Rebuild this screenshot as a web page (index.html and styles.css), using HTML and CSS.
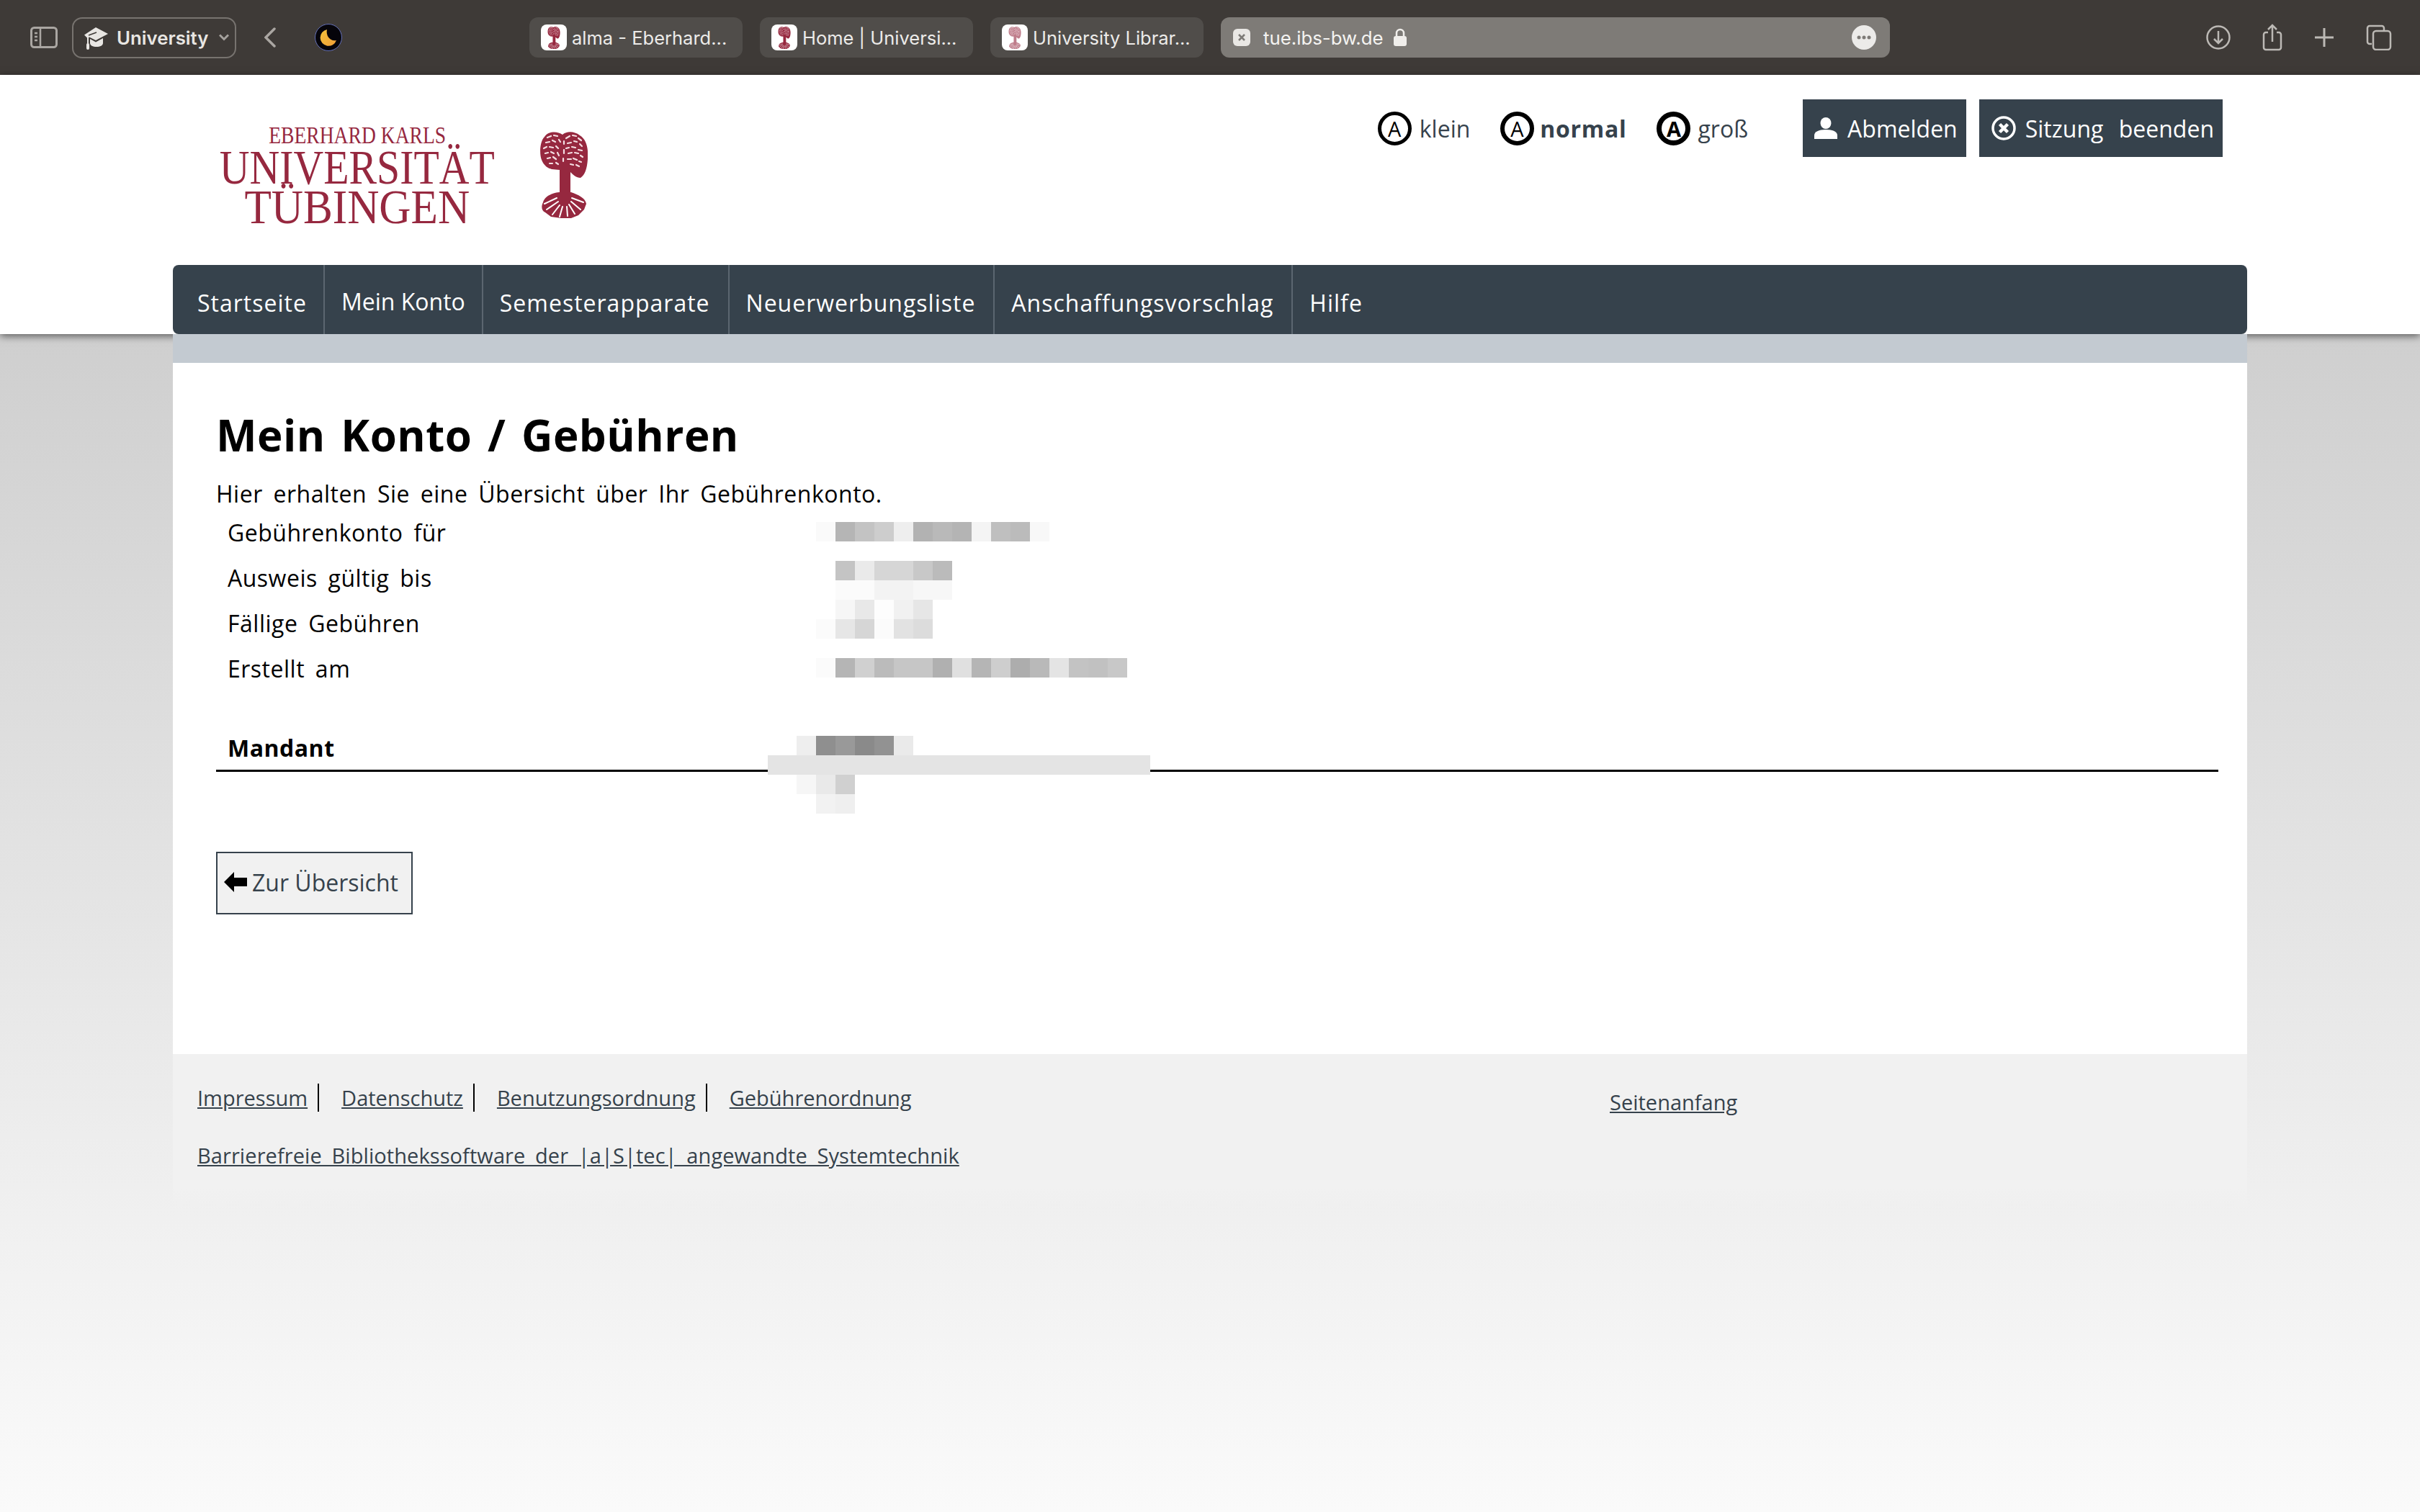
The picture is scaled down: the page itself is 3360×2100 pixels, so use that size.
FILE: index.html
```html
<!DOCTYPE html>
<html lang="de">
<head>
    <meta charset="UTF-8">
    <title>Mein Konto / Gebühren</title>
    <link rel="stylesheet" href="styles.css">
</head>
<body>
    <!-- Browser toolbar -->
    <div class="toolbar">
        <svg class="tb-sidebar" width="38" height="30" viewBox="0 0 38 30" fill="none" stroke="#aaa6a2" stroke-width="3">
            <rect x="1.5" y="1.5" width="35" height="27" rx="4"/>
            <path d="M14 2v26M6 9h4M6 14h4M6 19h4" stroke-width="2.5"/>
        </svg>
        <div class="tb-group">
            <svg width="36" height="40" viewBox="0 0 36 40" fill="#e8e6e3">
                <path d="M17 6 34 15 17 24 8 19.500 5.500 21 1 16.500z"/>
                <path d="M9 22l8 4.500 10-5.500v7c0 3-4 5-9 5s-9-2-9-5z"/>
                <path d="M5 18h2v12H5z"/><rect x="4" y="28" width="4" height="9" rx="2"/>
                <path d="M7 17l11-4" stroke="#3e3a37" stroke-width="1.500" fill="none"/>
            </svg>
            <span class="tb-group-name">University</span>
            <svg width="14" height="10" viewBox="0 0 14 10" fill="none" stroke="#a5a19d" stroke-width="3"><path d="M1 1.500l6 6 6-6"/></svg>
        </div>
        <svg class="tb-back" width="16" height="28" viewBox="0 0 16 28" fill="none" stroke="#aaa6a2" stroke-width="3.500" stroke-linecap="round"><path d="M14 2 2 14l12 12"/></svg>
        <svg class="tb-moon" width="38" height="38" viewBox="0 0 38 38">
            <defs>
                <linearGradient id="moon" x1="0" y1="0" x2="1" y2="1">
                    <stop offset="0" stop-color="#f4c23c"/>
                    <stop offset="1" stop-color="#ee9d36"/>
                </linearGradient>
            </defs>
            <circle cx="19" cy="19" r="18.500" fill="#05040a" stroke="#6470b8"/>
            <path d="M17 8a11.500 11.500 0 1 0 13 15c-8 2-15-6-13-15z" fill="url(#moon)"/>
        </svg>
        <div class="tabs">
            <div class="tab">
                <span class="favicon"><svg width="22" height="31"><use href="#tree"/></svg></span>
                <span class="tab-title">alma - Eberhard...</span>
            </div>
            <div class="tab">
                <span class="favicon"><svg width="22" height="31"><use href="#tree"/></svg></span>
                <span class="tab-title">Home | Universi...</span>
            </div>
            <div class="tab">
                <span class="favicon"><svg class="faded" width="22" height="31"><use href="#tree"/></svg></span>
                <span class="tab-title">University Librar...</span>
            </div>
            <div class="tab tab-active">
                <svg class="tab-close" width="24" height="24" viewBox="0 0 24 24">
                    <rect width="24" height="24" rx="6" fill="#e9e7e4"/>
                    <path d="M8 8l8 8M16 8l-8 8" stroke="#7e7b77" stroke-width="2.500"/>
                </svg>
                <span class="tab-url">tue.ibs-bw.de</span>
                <svg class="tab-lock" width="20" height="26" viewBox="0 0 20 26">
                    <rect x="1" y="11" width="18" height="14" rx="3" fill="#f0eeeb"/>
                    <path d="M5 11V7a5 5 0 0 1 10 0v4" fill="none" stroke="#f0eeeb" stroke-width="2.500"/>
                </svg>
                <svg class="tab-more" width="34" height="34" viewBox="0 0 34 34">
                    <circle cx="17" cy="17" r="17" fill="#ecebe9"/>
                    <circle cx="10" cy="17" r="2.500" fill="#7e7b77"/><circle cx="17" cy="17" r="2.500" fill="#7e7b77"/><circle cx="24" cy="17" r="2.500" fill="#7e7b77"/>
                </svg>
            </div>
        </div>
        <div class="tb-actions">
            <svg width="34" height="34" viewBox="0 0 34 34" fill="none" stroke="#bcb9b5" stroke-width="2.500"><circle cx="17" cy="17" r="15.500"/><path d="M17 8v17M11 19l6 6 6-6"/></svg>
            <svg width="28" height="38" viewBox="0 0 28 38" fill="none" stroke="#bcb9b5" stroke-width="2.500"><path d="M8 12H5a3 3 0 0 0-3 3v18a3 3 0 0 0 3 3h18a3 3 0 0 0 3-3V15a3 3 0 0 0-3-3h-3"/><path d="M14 25V2M8 8l6-6 6 6"/></svg>
            <svg width="28" height="28" viewBox="0 0 28 28" fill="none" stroke="#bcb9b5" stroke-width="3"><path d="M14 1v26M1 14h26"/></svg>
            <svg width="36" height="36" viewBox="0 0 36 36" fill="none" stroke="#bcb9b5" stroke-width="2.500"><path d="M8 27H5a3 3 0 0 1-3-3V5a3 3 0 0 1 3-3h17a3 3 0 0 1 3 3v3"/><rect x="10" y="9" width="24" height="26" rx="4"/></svg>
        </div>
    </div>

    <!-- Shared tree symbol, used by logo and favicons -->
    <svg class="symbols" width="0" height="0">
        <symbol id="tree" viewBox="0 0 66 120">
            <path fill="#96283f" d="M31 4C24-1 11-1 6 7-1 14-1 32 2 39c3 8 9 12 14 13l11 1v34h15V56c4 4 8 8 14 8 6-4 9-12 10-26 1-13-1-27-11-33C47-1 37-1 31 4z"/>
            <path fill="#96283f" d="M26 84C16 85 6 90 4 98c-3 6-2 12 3 14l8 6 14 2h14l10-4 8-8 3-8c-1-8-12-13-21-16z"/>
            <g fill="none" stroke="#f4dfe3" stroke-width="2.200" stroke-linecap="round">
                <path d="M10 8l5-2M19 5l5 1M26 11l2 3M8 15l5-1M17 12l4 2M5 23l4-2M13 21l5 1M22 20l3 3M7 30l4-1M15 28l4 2M24 29l2 4M10 37l4-1M18 35l4 3M13 44l4 0M22 43l3 2"/>
                <path d="M36 9l5-3M45 5l5 1M53 9l4 3M38 16l5-1M47 13l4 1M55 17l3 3M36 23l4-1M44 21l5 1M53 25l5 1M39 30l5-1M48 29l5 1M56 33l3 2M38 38l5 0M46 37l5 2M54 41l3 1M42 45l4 1M50 46l4 2M33 13l0 4M33 25l0 5M32 37l0 4"/>
            </g>
            <g fill="none" stroke="#fff" stroke-width="2" stroke-linecap="round">
                <path d="M23 92 6 100M25 97 9 108M27 102 17 115M31 104 27 118M37 104l1 13M40 101l8 13M43 97l13 11M44 92l16 6"/>
            </g>
        </symbol>
    </svg>

    <div class="page">
        <header class="site-head">
            <div class="head-inner">
                <a class="logo">
                    <div class="logo-text">
                        <span class="logo-small">EBERHARD KARLS</span>
                        <span class="logo-big">UNIVERSITÄT</span>
                        <span class="logo-big logo-city">TÜBINGEN</span>
                    </div>
                    <svg class="logo-tree" width="66" height="120"><use href="#tree"/></svg>
                </a>
                <div class="head-tools">
                    <a class="size-link"><span class="size-a">A</span>klein</a>
                    <a class="size-link size-normal"><span class="size-a">A</span>normal</a>
                    <a class="size-link size-large"><span class="size-a">A</span>groß</a>
                    <a class="head-btn">
                        <svg width="34" height="30" viewBox="0 0 34 30" fill="#fff"><ellipse cx="17" cy="8" rx="7.500" ry="8"/><path d="M1 30v-5c0-5 6-8 16-8s16 3 16 8v5z"/></svg>
                        Abmelden
                    </a>
                    <a class="head-btn head-btn-end">
                        <svg width="34" height="34" viewBox="0 0 34 34" fill="none" stroke="#fff"><circle cx="17" cy="17" r="15" stroke-width="3.500"/><path d="M11.500 11.500l11 11M22.500 11.500l-11 11" stroke-width="4.500"/></svg>
                        Sitzung beenden
                    </a>
                </div>
            </div>
            <nav class="main-nav">
                <a class="nav-item">Startseite</a>
                <a class="nav-item nav-active">Mein Konto</a>
                <a class="nav-item">Semesterapparate</a>
                <a class="nav-item">Neuerwerbungsliste</a>
                <a class="nav-item">Anschaffungsvorschlag</a>
                <a class="nav-item">Hilfe</a>
            </nav>
        </header>

        <div class="wrap">
            <div class="band"></div>
            <main class="content">
                <h1>Mein Konto / Gebühren</h1>
                <p class="intro">Hier erhalten Sie eine Übersicht über Ihr Gebührenkonto.</p>
                <div class="info">
                    <div class="info-row">Gebührenkonto für</div>
                    <div class="info-row">Ausweis gültig bis</div>
                    <div class="info-row">Fällige Gebühren</div>
                    <div class="info-row">Erstellt am</div>
                </div>
                <div class="mandant">Mandant</div>
                <a class="back-btn">
                    <svg width="32" height="28" viewBox="0 0 32 28" fill="#000"><path d="M0 14 14 0v8h18v12H14v8z"/></svg>
                    Zur Übersicht
                </a>

                <!-- pixelated personal data -->
                <svg class="redact" width="531" height="405" viewBox="0 0 531 405" shape-rendering="crispEdges">
                    <g>
                        <rect x="67" y="0" width="27" height="27" fill="#fafafa"/><rect x="94" y="0" width="27" height="27" fill="#b5b5b5"/><rect x="121" y="0" width="27" height="27" fill="#c3c3c3"/><rect x="148" y="0" width="27" height="27" fill="#cdcdcd"/><rect x="175" y="0" width="27" height="27" fill="#eeeeee"/><rect x="202" y="0" width="27" height="27" fill="#b2b2b2"/><rect x="229" y="0" width="27" height="27" fill="#b9b9b9"/><rect x="256" y="0" width="27" height="27" fill="#b4b4b4"/><rect x="283" y="0" width="27" height="27" fill="#f4f4f4"/><rect x="310" y="0" width="27" height="27" fill="#bfbfbf"/><rect x="337" y="0" width="27" height="27" fill="#bbbbbb"/><rect x="364" y="0" width="27" height="27" fill="#f8f8f8"/>
                    </g>
                    <g>
                        <rect x="94" y="54" width="27" height="27" fill="#c4c4c4"/><rect x="121" y="54" width="27" height="27" fill="#eaeaea"/><rect x="148" y="54" width="54" height="27" fill="#d6d6d6"/><rect x="202" y="54" width="27" height="27" fill="#c8c8c8"/><rect x="229" y="54" width="27" height="27" fill="#bbbbbb"/>
                        <rect x="94" y="81" width="54" height="27" fill="#fbfbfb"/><rect x="148" y="81" width="54" height="27" fill="#f3f3f3"/><rect x="202" y="81" width="54" height="27" fill="#f7f7f7"/>
                    </g>
                    <g>
                        <rect x="94" y="108" width="27" height="27" fill="#f6f6f6"/><rect x="121" y="108" width="27" height="27" fill="#e8e8e8"/><rect x="148" y="108" width="27" height="27" fill="#fdfdfd"/><rect x="175" y="108" width="27" height="27" fill="#f1f1f1"/><rect x="202" y="108" width="27" height="27" fill="#e6e6e6"/>
                        <rect x="67" y="135" width="27" height="27" fill="#fbfbfb"/><rect x="94" y="135" width="27" height="27" fill="#e6e6e6"/><rect x="121" y="135" width="27" height="27" fill="#d6d6d6"/><rect x="148" y="135" width="27" height="27" fill="#fbfbfb"/><rect x="175" y="135" width="27" height="27" fill="#e2e2e2"/><rect x="202" y="135" width="27" height="27" fill="#dcdcdc"/>
                    </g>
                    <g>
                        <rect x="67" y="189" width="27" height="27" fill="#fbfbfb"/><rect x="94" y="189" width="27" height="27" fill="#b5b5b5"/><rect x="121" y="189" width="27" height="27" fill="#d0d0d0"/><rect x="148" y="189" width="27" height="27" fill="#bbbbbb"/><rect x="175" y="189" width="54" height="27" fill="#c6c6c6"/><rect x="229" y="189" width="27" height="27" fill="#b0b0b0"/><rect x="256" y="189" width="27" height="27" fill="#e0e0e0"/><rect x="283" y="189" width="27" height="27" fill="#b5b5b5"/><rect x="310" y="189" width="27" height="27" fill="#cecece"/><rect x="337" y="189" width="27" height="27" fill="#adadad"/><rect x="364" y="189" width="27" height="27" fill="#b9b9b9"/><rect x="391" y="189" width="27" height="27" fill="#e4e4e4"/><rect x="418" y="189" width="27" height="27" fill="#c3c3c3"/><rect x="445" y="189" width="27" height="27" fill="#c1c1c1"/><rect x="472" y="189" width="27" height="27" fill="#c8c8c8"/>
                    </g>
                    <g>
                        <rect x="40" y="297" width="27" height="27" fill="#eeeeee"/><rect x="67" y="297" width="27" height="27" fill="#8f8f8f"/><rect x="94" y="297" width="27" height="27" fill="#999999"/><rect x="121" y="297" width="27" height="27" fill="#8a8a8a"/><rect x="148" y="297" width="27" height="27" fill="#929292"/><rect x="175" y="297" width="27" height="27" fill="#eaeaea"/>
                        <rect x="0" y="324" width="531" height="27" fill="#e4e4e4"/>
                        <rect x="40" y="351" width="27" height="27" fill="#f6f6f6"/><rect x="67" y="351" width="27" height="27" fill="#e9e9e9"/><rect x="94" y="351" width="27" height="27" fill="#d0d0d0"/>
                        <rect x="67" y="378" width="27" height="27" fill="#f2f2f2"/><rect x="94" y="378" width="27" height="27" fill="#efefef"/>
                    </g>
                </svg>
            </main>
            <footer class="site-foot">
                <div class="foot-left">
                    <div class="foot-links">
                        <a>Impressum</a>
                        <a>Datenschutz</a>
                        <a>Benutzungsordnung</a>
                        <a>Gebührenordnung</a>
                    </div>
                    <a class="foot-credit">Barrierefreie Bibliothekssoftware der |a|S|tec| angewandte Systemtechnik</a>
                </div>
                <a class="foot-top">Seitenanfang</a>
            </footer>
        </div>
    </div>
</body>
</html>
```

FILE: styles.css
```css
/* Global */
* {
    margin: 0;
    padding: 0;
    box-sizing: border-box;
}

html, body {
    height: 100%;
}

body {
    font-family: "Open Sans", sans-serif;
    font-size: 32px;
    color: #000;
    background: #fff;
    overflow: hidden;
}

svg {
    display: block;
    flex-shrink: 0;
}

.symbols {
    position: absolute;
}

/* Browser toolbar */
.toolbar {
    display: flex;
    align-items: center;
    height: 104px;
    padding-left: 42px;
    background: #3e3a37;
    font-family: Inter, sans-serif;
}

.tb-group {
    display: flex;
    align-items: center;
    width: 228px;
    height: 57px;
    margin-left: 20px;
    padding-left: 14px;
    border: 2px solid #77736f;
    border-radius: 14px;
}

.tb-group-name {
    margin: 0 15px 0 10px;
    font-size: 25.8px;
    font-weight: 600;
    color: #e8e6e3;
}

.tb-back {
    margin-left: 39px;
}

.tb-moon {
    margin-left: 54px;
}

.tabs {
    display: flex;
    gap: 24px;
    margin-left: 260px;
}

.tab {
    display: flex;
    align-items: center;
    width: 296px;
    height: 56px;
    padding-left: 16px;
    border-radius: 12px;
    background: #504d4a;
}

.favicon {
    display: flex;
    align-items: center;
    justify-content: center;
    width: 36px;
    height: 36px;
    border-radius: 8px;
    background: #fff;
}

.faded {
    opacity: .6;
}

.tab-title {
    margin-left: 7px;
    font-size: 25.5px;
    color: #ecebe9;
    white-space: nowrap;
}

.tab-active {
    width: 929px;
    padding-left: 17px;
    background: #7e7b77;
}

.tab-url {
    margin-left: 18px;
    font-size: 25.8px;
    color: #f4f3f1;
}

.tab-lock {
    margin-left: 13px;
}

.tab-more {
    margin-left: auto;
    margin-right: 19px;
}

.tb-actions {
    display: flex;
    align-items: center;
    gap: 44px;
    margin-left: 439px;
}

/* Page */
.page {
    height: 1996px;
    background: linear-gradient(180deg, #cfcfcf 360px, #efefef 1546px, #fafafa 1996px);
}

.site-head {
    position: relative;
    height: 360px;
    padding: 0 240px;
    background: #fff;
    box-shadow: 0 3px 10px rgba(0, 0, 0, .55);
}

.head-inner {
    display: flex;
    justify-content: space-between;
    height: 264px;
}

.logo {
    display: flex;
    align-items: flex-start;
    padding: 79px 0 0 66px;
}

.logo-text {
    display: flex;
    flex-direction: column;
    align-items: center;
    width: 381px;
    font-family: "Liberation Serif", serif;
    color: #96283f;
}

.logo-small {
    margin-top: -6px;
    font-size: 33px;
    line-height: 22px;
    transform: scaleX(.836);
}

.logo-big {
    margin-top: 11px;
    margin-left: -2px;
    font-size: 68px;
    line-height: 45px;
    transform: scaleX(.85);
}

.logo-city {
    margin-top: 10px;
    transform: scaleX(.9);
}

.logo-tree {
    margin: 0 0 0 63px;
}

.head-tools {
    display: flex;
    align-items: flex-start;
    padding: 34px 34px 0 0;
}

.size-link {
    display: flex;
    align-items: center;
    height: 80px;
    margin-right: 42px;
    font-size: 32px;
    color: #36424c;
}

.size-a {
    display: flex;
    align-items: center;
    justify-content: center;
    width: 47px;
    height: 47px;
    margin-right: 11px;
    border: 5px solid #000;
    border-radius: 50%;
    font-size: 29px;
    color: #000;
}

.size-normal {
    font-weight: 700;
    letter-spacing: .7px;
}

.size-normal .size-a {
    margin-right: 8px;
    font-weight: 400;
    border-width: 6px;
}

.size-large .size-a {
    margin-right: 10px;
    font-weight: 700;
    border-width: 7px;
}

.size-large {
    margin-right: 76px;
}

.head-btn {
    display: flex;
    align-items: center;
    gap: 13px;
    height: 80px;
    margin-left: 18px;
    padding: 0 12px 0 15px;
    background: #36424c;
    color: #fff;
    word-spacing: 13px;
}

.head-btn-end {
    padding-left: 17px;
}

.size-large + .head-btn {
    margin-left: 0;
}

.main-nav {
    display: flex;
    height: 96px;
    border-radius: 8px;
    background: #36424c;
}

.nav-item {
    display: flex;
    align-items: center;
    padding: 8px 25px 0 23px;
    border-right: 2px solid #5b6670;
    color: #fff;
    font-size: 32px;
    letter-spacing: 1px;
}

.nav-item:first-child {
    padding-left: 34px;
    padding-right: 23px;
}

.nav-item:last-child {
    border-right: 0;
}

.nav-active {
    padding-top: 4px;
    padding-right: 23px;
    letter-spacing: 0;
}

/* Content */
.wrap {
    position: relative;
    width: 2880px;
    margin: 0 auto;
}

.band {
    height: 40px;
    background: #c3cad1;
}

.content {
    position: relative;
    height: 960px;
    padding: 58px 40px 0 60px;
    background: #fff;
}

h1 {
    font-size: 60px;
    line-height: 84px;
    font-weight: 700;
    letter-spacing: .5px;
    word-spacing: 5.5px;
}

.intro {
    margin-top: 18px;
    line-height: 44px;
    letter-spacing: .5px;
    word-spacing: 6px;
}

.info {
    margin-left: 16px;
}

.info-row {
    height: 63px;
    line-height: 63px;
    letter-spacing: .5px;
    word-spacing: 6px;
}

.mandant {
    height: 76px;
    margin-top: 36px;
    padding: 21px 0 0 16px;
    border-bottom: 3px solid #000;
    font-weight: 700;
    line-height: 44px;
    letter-spacing: .5px;
}

.back-btn {
    display: flex;
    align-items: center;
    width: 273px;
    height: 87px;
    margin-top: 111px;
    padding: 0 0 3px 9px;
    gap: 7px;
    border: 2px solid #36424c;
    background: #f1f1f1;
    color: #36424c;
}

.redact {
    position: absolute;
    left: 826px;
    top: 221px;
}

/* Footer */
.site-foot {
    display: flex;
    height: 216px;
    padding: 41px 34px 0;
    background: linear-gradient(180deg, #f1f1f1 86%, rgba(241, 241, 241, 0));
    font-size: 29px;
    color: #36424c;
}

.foot-left {
    width: 1961px;
}

.foot-links {
    display: flex;
}

.foot-links a {
    padding-right: 14px;
    margin-right: 31px;
    border-right: 2px solid #000;
    text-decoration: underline;
}

.foot-links a:last-child {
    border-right: 0;
}

.foot-credit {
    display: block;
    margin-top: 41px;
    text-decoration: underline;
    letter-spacing: .08px;
    word-spacing: 6px;
}

.foot-top {
    margin-top: 6px;
    height: 42px;
    text-decoration: underline;
}
```
